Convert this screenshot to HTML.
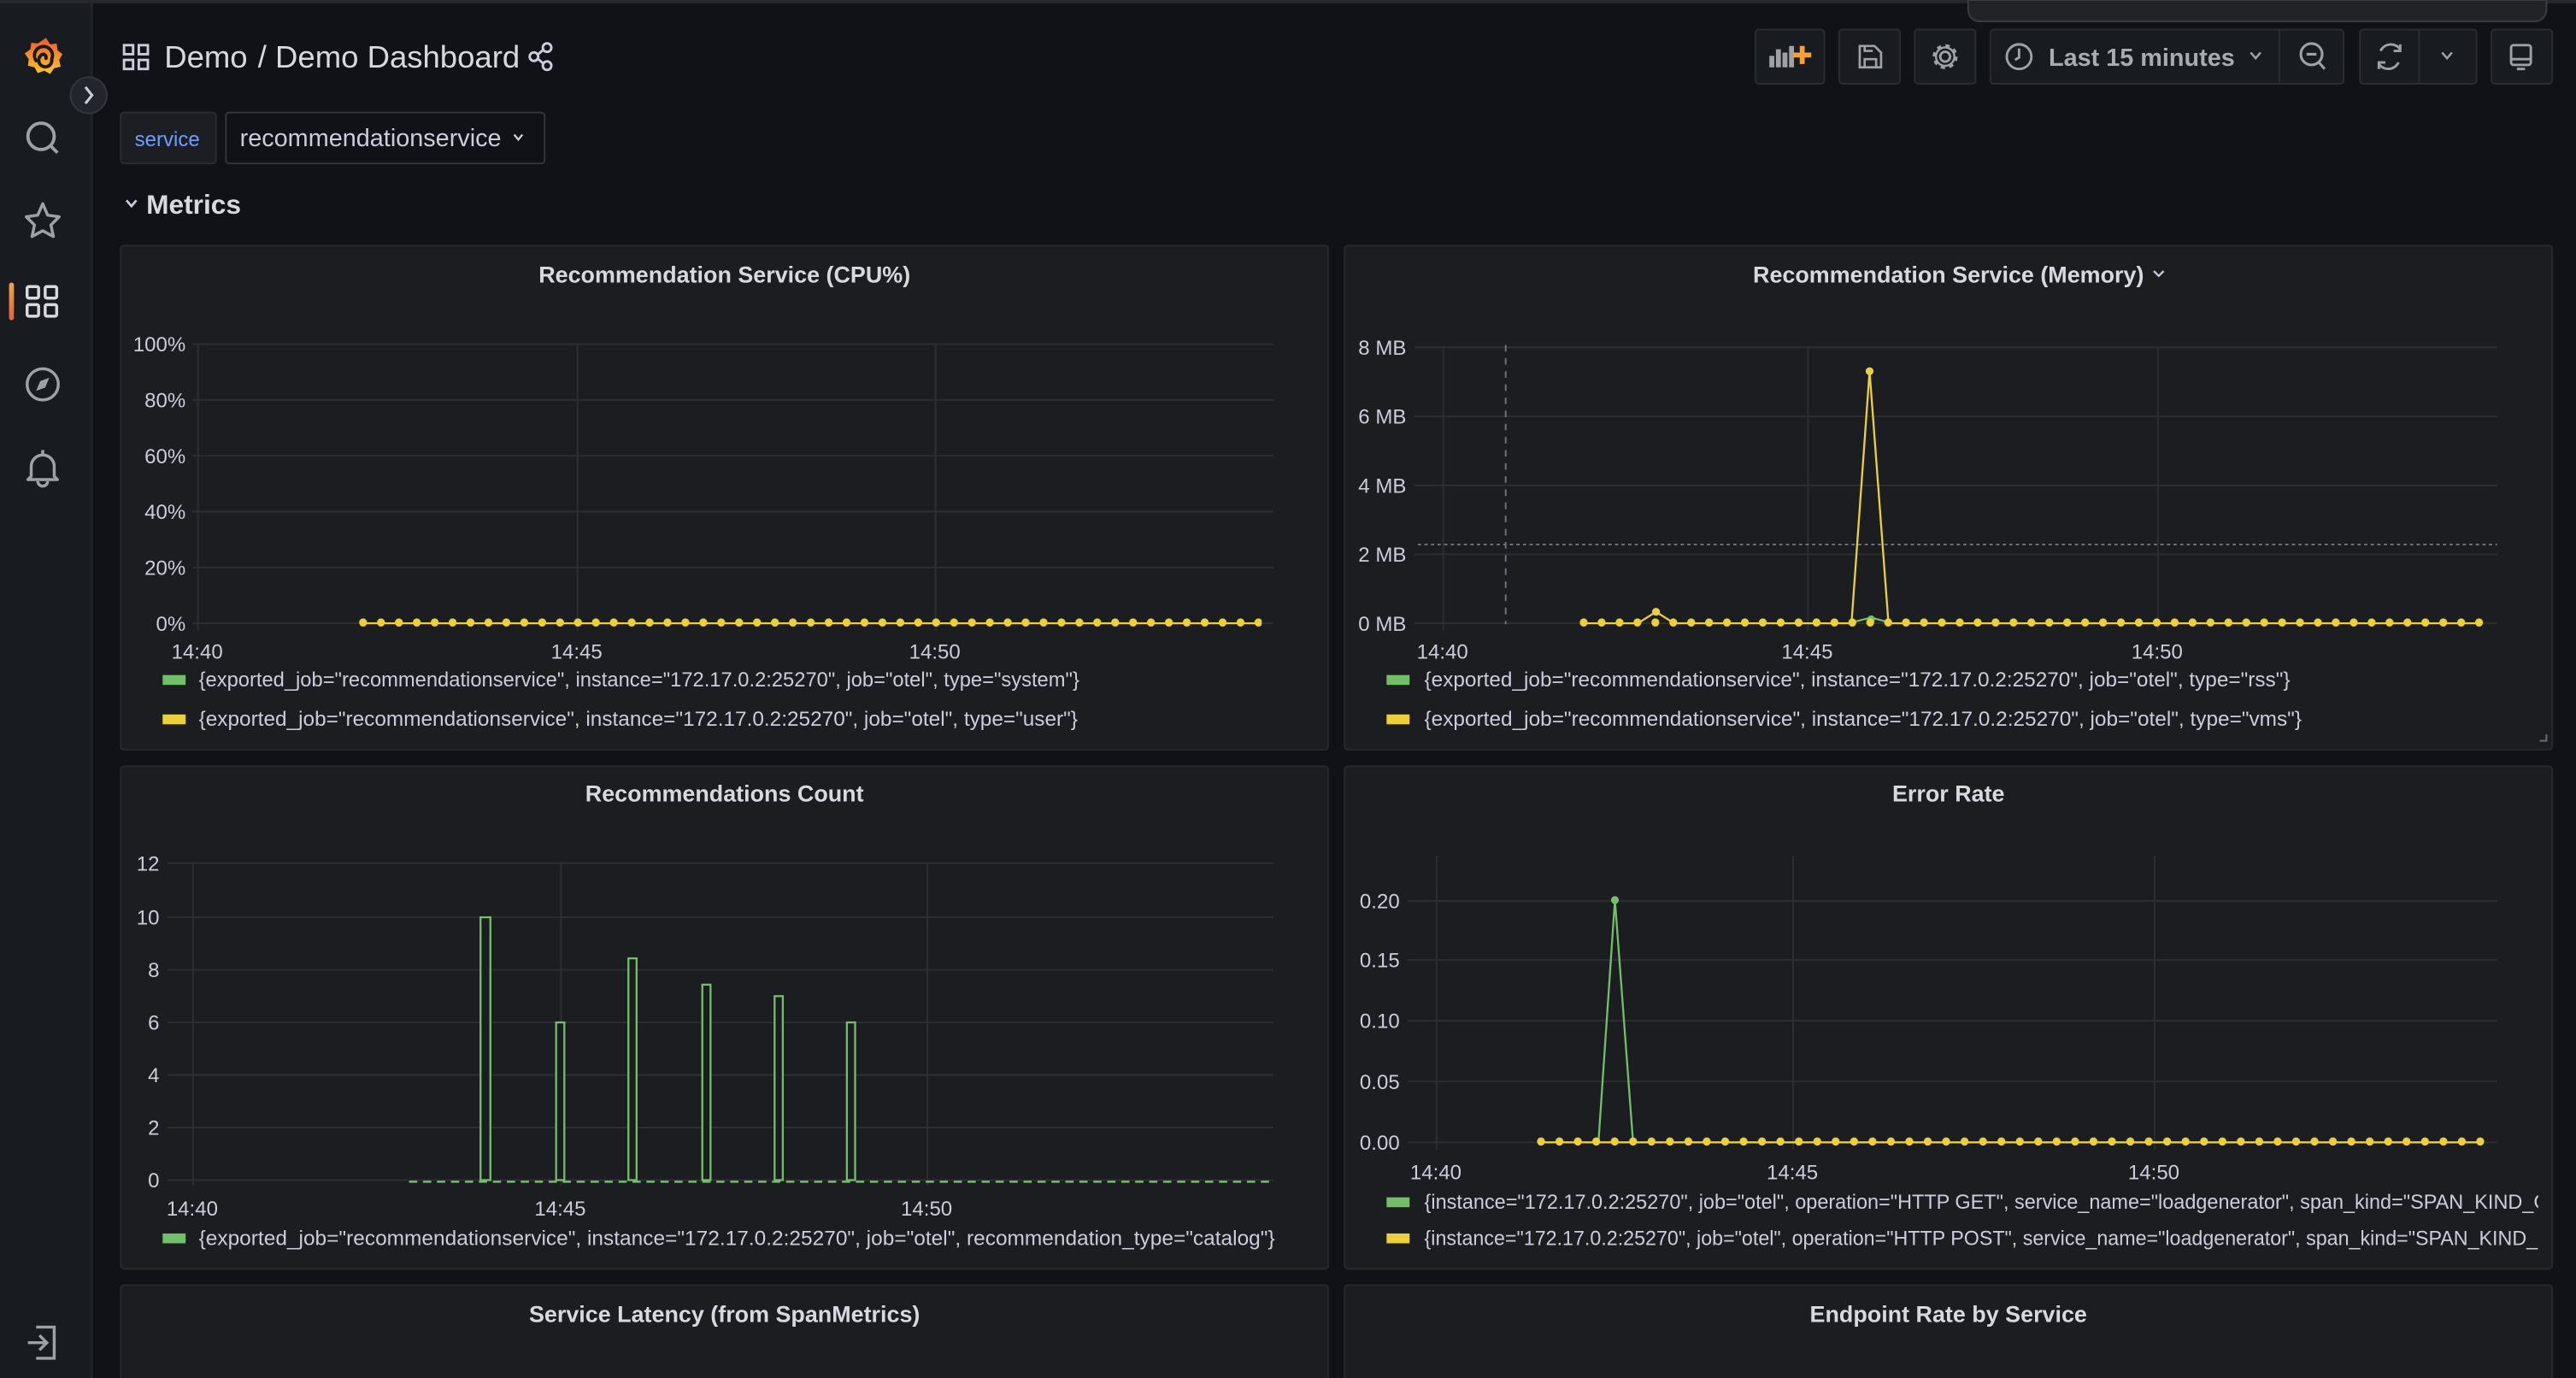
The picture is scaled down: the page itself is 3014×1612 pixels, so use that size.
<!DOCTYPE html>
<html><head><meta charset="utf-8"><style>
html,body{margin:0;padding:0;background:#111217;overflow:hidden;width:3014px;height:1612px}
svg{display:block}
text{font-family:"Liberation Sans",sans-serif}
</style></head><body>
<svg width="3014" height="1612" viewBox="0 0 1568 839" preserveAspectRatio="none" xmlns="http://www.w3.org/2000/svg">
<defs>
<pattern id="dy" x="215.55" y="374" width="10.9" height="10" patternUnits="userSpaceOnUse"><ellipse cx="5.45" cy="5" rx="2.4" ry="2.5" fill="#ecd03a"/></pattern>
<pattern id="dy2" x="958.55" y="374" width="10.9" height="10" patternUnits="userSpaceOnUse"><ellipse cx="5.45" cy="5" rx="2.4" ry="2.5" fill="#ecd03a"/></pattern>
<pattern id="dy3" x="932.4" y="690" width="11.21" height="10" patternUnits="userSpaceOnUse"><ellipse cx="5.6" cy="5" rx="2.4" ry="2.5" fill="#ecd03a"/></pattern>
<clipPath id="c4"><rect x="818" y="466" width="727" height="307"/></clipPath>
<linearGradient id="og" x1="0" y1="0" x2="0" y2="1"><stop offset="0" stop-color="#f3a33f"/><stop offset="1" stop-color="#e7613a"/></linearGradient>
<linearGradient id="lg" x1="0" y1="0" x2="0" y2="1"><stop offset="0" stop-color="#ee5a2a"/><stop offset="1" stop-color="#fbc52b"/></linearGradient>
</defs>
<rect width="1568" height="839" fill="#111217"/>
<!-- sidebar -->
<rect x="0" y="0" width="56" height="839" fill="#181b1f"/>
<rect x="55.5" y="0" width="1" height="839" fill="#26282d"/>
<rect x="0" y="0" width="1568" height="2" fill="#26282d"/>
<!-- logo -->
<path d="M28 23 L30.5 27 L34.5 26.5 L35 30.5 L38 33 L36 36.5 L37 40.5 L33 41.5 L30.5 45 L27 43 L23 44.5 L21 41 L17 40 L17.5 36 L15 32.5 L18.5 30 L19 26 L23 26.5 Z" fill="url(#lg)"/>
<path d="M22 37 A5.5 5.5 0 1 1 31.5 36 A4 4 0 1 1 26 33 A2 2 0 0 1 28 35.5" fill="none" stroke="#181b1f" stroke-width="2" stroke-linecap="round"/>
<!-- collapse button -->
<circle cx="54" cy="58" r="11" fill="#22252b" stroke="#34373d"/>
<path d="M52 53 L56 58 L52 63" fill="none" stroke="#ccccdc" stroke-width="1.6"/>
<!-- search -->
<circle cx="25" cy="83" r="8" fill="none" stroke="#9fa1a7" stroke-width="2"/>
<path d="M31 89 L35 93" stroke="#9fa1a7" stroke-width="2"/>
<!-- star -->
<path d="M26 124 L29 131 L36 132 L31 137 L32.5 144 L26 140.5 L19.5 144 L21 137 L16 132 L23 131 Z" fill="none" stroke="#9fa1a7" stroke-width="1.8" stroke-linejoin="round"/>
<!-- dashboards active -->
<rect x="5.5" y="172" width="3" height="23" rx="1.5" fill="url(#og)"/>
<g fill="none" stroke="#d8d8e0" stroke-width="1.8"><rect x="16.5" y="174.5" width="7" height="7" rx="1"/><rect x="27.5" y="174.5" width="7" height="7" rx="1"/><rect x="16.5" y="185.5" width="7" height="7" rx="1"/><rect x="27.5" y="185.5" width="7" height="7" rx="1"/></g>
<!-- explore -->
<circle cx="26" cy="234" r="9.5" fill="none" stroke="#9fa1a7" stroke-width="1.8"/>
<path d="M30 230 L27.5 236 L22 238 L24.5 232 Z" fill="#9fa1a7"/>
<!-- bell -->
<path d="M19 290 L19 284 A7 7 0 0 1 33 284 L33 290 L35 292 L17 292 Z" fill="none" stroke="#9fa1a7" stroke-width="1.8" stroke-linejoin="round"/>
<path d="M23 293 A3 3 0 0 0 29 293" fill="none" stroke="#9fa1a7" stroke-width="1.8"/>
<path d="M26 274 L26 277" stroke="#9fa1a7" stroke-width="1.8"/>
<!-- signin -->
<path d="M22 808 L33 808 L33 827 L22 827" fill="none" stroke="#9fa1a7" stroke-width="1.8"/>
<path d="M17 817.5 L28 817.5 M24 813 L28.5 817.5 L24 822" fill="none" stroke="#9fa1a7" stroke-width="1.8"/>
<!-- header -->
<g fill="none" stroke="#ccccdc" stroke-width="1.5"><rect x="75.5" y="27.5" width="5.5" height="5.5"/><rect x="84.5" y="27.5" width="5.5" height="5.5"/><rect x="75.5" y="36.5" width="5.5" height="5.5"/><rect x="84.5" y="36.5" width="5.5" height="5.5"/></g>
<text x="100" y="41" font-size="19" fill="#d8d9e0">Demo</text>
<text x="157" y="41" font-size="19" fill="#d8d9e0">/ Demo Dashboard</text>
<g fill="none" stroke="#ccccdc" stroke-width="1.5"><circle cx="333" cy="29" r="2.6"/><circle cx="333" cy="40" r="2.6"/><circle cx="325" cy="34.5" r="2.6"/><path d="M327.3 33.3 L330.7 30.3 M327.3 35.7 L330.7 38.7"/></g>
<!-- top popup -->
<path d="M1198 0 L1198 6 A7 7 0 0 0 1205 13 L1543 13 A7 7 0 0 0 1550 6 L1550 0 Z" fill="#222327" stroke="#3a3c42"/>
<!-- toolbar -->
<g fill="#181b1f" stroke="#2a2c31">
<rect x="1068.5" y="18" width="42" height="33" rx="2"/>
<rect x="1119.5" y="18" width="37" height="33" rx="2"/>
<rect x="1165.5" y="18" width="37" height="33" rx="2"/>
<rect x="1211.5" y="18" width="215" height="33" rx="2"/>
<rect x="1436.5" y="18" width="71" height="33" rx="2"/>
<rect x="1516.5" y="18" width="37" height="33" rx="2"/>
</g>
<path d="M1387.5 18 V51 M1472.5 18 V51" stroke="#2a2c31"/>
<g fill="#9fa1a7"><rect x="1077" y="34" width="3" height="7"/><rect x="1081" y="30" width="3" height="11"/><rect x="1085" y="32" width="3" height="9"/><rect x="1089" y="28" width="3" height="13"/></g>
<path d="M1097 28 V39 M1091.5 33.5 H1102.5" stroke="#f5a13a" stroke-width="3"/>
<path d="M1132 28 H1141 L1145 32 V41 H1132 Z M1135 41 V36 H1142 V41 M1135 28 V31 H1140" fill="none" stroke="#9fa1a7" stroke-width="1.4"/>
<circle cx="1184" cy="34.5" r="3" fill="none" stroke="#9fa1a7" stroke-width="1.5"/>
<circle cx="1184" cy="34.5" r="6.5" fill="none" stroke="#9fa1a7" stroke-width="2.2" stroke-dasharray="2.5 2.6"/>
<circle cx="1184" cy="34.5" r="5.6" fill="none" stroke="#9fa1a7" stroke-width="1.3"/>
<circle cx="1229" cy="34.5" r="7.5" fill="none" stroke="#9fa1a7" stroke-width="1.5"/>
<path d="M1229 29.5 V35 L1226.5 36.5" fill="none" stroke="#9fa1a7" stroke-width="1.5"/>
<text x="1247" y="40" font-size="15" font-weight="bold" fill="#a9abb2">Last 15 minutes</text>
<path d="M1370 32 L1373 35.5 L1376 32" fill="none" stroke="#9fa1a7" stroke-width="1.3"/>
<circle cx="1407" cy="33" r="6.5" fill="none" stroke="#9fa1a7" stroke-width="1.6"/>
<path d="M1404 33 H1410 M1411.5 38 L1415 42" stroke="#9fa1a7" stroke-width="1.6"/>
<path d="M1449 31 A7 7 0 0 1 1461 30 M1461 27 V31 H1457 M1460 38 A7 7 0 0 1 1448 39 M1448 42 V38 H1452" fill="none" stroke="#9fa1a7" stroke-width="1.5"/>
<path d="M1486.5 32 L1489.5 35.5 L1492.5 32" fill="none" stroke="#9fa1a7" stroke-width="1.3"/>
<rect x="1528.5" y="27.5" width="12" height="12" rx="1.5" fill="none" stroke="#9fa1a7" stroke-width="1.5"/>
<path d="M1528.5 36 H1540.5 M1532 42 H1537" stroke="#9fa1a7" stroke-width="1.5"/>
<!-- variable -->
<rect x="73.5" y="68.5" width="58" height="31" rx="2" fill="#1c1e23" stroke="#2a2c31"/>
<text x="82" y="89" font-size="12.5" fill="#6e9fff">service</text>
<rect x="137.5" y="68.5" width="194" height="31" rx="2" fill="#111217" stroke="#34363c"/>
<text x="146" y="89" font-size="15" fill="#ccccdc">recommendationservice</text>
<path d="M313 82 L315.5 85 L318 82" fill="none" stroke="#ccccdc" stroke-width="1.2"/>
<path d="M77 122 L80 125.5 L83 122" fill="none" stroke="#ccccdc" stroke-width="1.4"/>
<text x="89" y="130" font-size="16.5" font-weight="bold" fill="#d8d9e0">Metrics</text>
<!-- panels -->
<g fill="#1c1d21" stroke="#26282d">
<rect x="73.5" y="149.5" width="735" height="307" rx="2"/>
<rect x="818.5" y="149.5" width="735" height="307" rx="2"/>
<rect x="73.5" y="466.5" width="735" height="306" rx="2"/>
<rect x="818.5" y="466.5" width="735" height="306" rx="2"/>
<rect x="73.5" y="782.5" width="735" height="70" rx="2"/>
<rect x="818.5" y="782.5" width="735" height="70" rx="2"/>
</g>
<g font-size="14" font-weight="bold" fill="#d8d9e0" text-anchor="middle">
<text x="441" y="172">Recommendation Service (CPU%)</text>
<text x="1186" y="172">Recommendation Service (Memory)</text>
<text x="441" y="488">Recommendations Count</text>
<text x="1186" y="488">Error Rate</text>
<text x="441" y="805">Service Latency (from SpanMetrics)</text>
<text x="1186" y="805">Endpoint Rate by Service</text>
</g>
<path d="M1311 165 L1314 168 L1317 165" fill="none" stroke="#ccccdc" stroke-width="1.2"/>
<!-- P1 grid -->
<g stroke="#2c2e33" stroke-width="1">
<path d="M117 209.5 H775 M117 243.5 H775 M117 277.5 H775 M117 311.5 H775 M117 345.5 H775 M117 379.5 H775"/>
<path d="M120.5 209 V384 M351.5 209 V384 M569.5 209 V384"/>
</g>
<g font-size="12.5" fill="#ccccdc" text-anchor="end">
<text x="113" y="214">100%</text><text x="113" y="248">80%</text><text x="113" y="282">60%</text><text x="113" y="316">40%</text><text x="113" y="350">20%</text><text x="113" y="384">0%</text>
</g>
<g font-size="12.5" fill="#ccccdc" text-anchor="middle"><text x="120" y="401">14:40</text><text x="351" y="401">14:45</text><text x="569" y="401">14:50</text></g>
<path d="M221 379.5 H765" stroke="#ecd03a" stroke-width="1.2"/>
<rect x="217" y="374" width="551" height="10" fill="url(#dy)"/>
<rect x="99" y="411" width="14" height="6" fill="#73bf69"/>
<rect x="99" y="435" width="14" height="6" fill="#ecd03a"/>
<g font-size="12.5" fill="#ccccdc">
<text x="121" y="418" textLength="536" lengthAdjust="spacingAndGlyphs">{exported_job="recommendationservice", instance="172.17.0.2:25270", job="otel", type="system"}</text>
<text x="121" y="442" textLength="535" lengthAdjust="spacingAndGlyphs">{exported_job="recommendationservice", instance="172.17.0.2:25270", job="otel", type="user"}</text>
</g>
<!-- P2 -->
<g stroke="#2c2e33">
<path d="M861 211.5 H1520 M861 253.5 H1520 M861 295.5 H1520 M861 337.5 H1520 M861 379.5 H1520"/>
<path d="M878.5 211 V384 M1100.5 211 V384 M1313.5 211 V384"/>
</g>
<path d="M916.5 210 V380" stroke="#6c7580" stroke-dasharray="4 4"/>
<path d="M863 331.5 H1520" stroke="#6c7580" stroke-dasharray="2 2"/>
<g font-size="12.5" fill="#ccccdc" text-anchor="end">
<text x="856" y="216">8 MB</text><text x="856" y="258">6 MB</text><text x="856" y="300">4 MB</text><text x="856" y="342">2 MB</text><text x="856" y="384">0 MB</text>
</g>
<g font-size="12.5" fill="#ccccdc" text-anchor="middle"><text x="878" y="401">14:40</text><text x="1100" y="401">14:45</text><text x="1313" y="401">14:50</text></g>
<path d="M1127 379 L1139 376 L1150 379" fill="none" stroke="#73bf69" stroke-width="1.2"/>
<circle cx="1139" cy="377" r="2.3" fill="#73bf69"/>
<path d="M964 379.5 H997 L1008 372.5 L1019 379.5 H1127 L1138 226 L1149.5 379.5 H1510" fill="none" stroke="#ecd03a" stroke-width="1.2"/>
<rect x="960" y="374" width="554" height="10" fill="url(#dy2)"/>
<circle cx="1008" cy="372.5" r="2.4" fill="#ecd03a"/>
<circle cx="1138" cy="226" r="2.4" fill="#ecd03a"/>
<rect x="844" y="411" width="14" height="6" fill="#73bf69"/>
<rect x="844" y="435" width="14" height="6" fill="#ecd03a"/>
<g font-size="12.5" fill="#ccccdc">
<text x="867" y="418" textLength="527" lengthAdjust="spacingAndGlyphs">{exported_job="recommendationservice", instance="172.17.0.2:25270", job="otel", type="rss"}</text>
<text x="867" y="442" textLength="534" lengthAdjust="spacingAndGlyphs">{exported_job="recommendationservice", instance="172.17.0.2:25270", job="otel", type="vms"}</text>
</g>
<path d="M1546 451 H1550 V447" fill="none" stroke="#6c6e75" stroke-width="1"/>
<!-- P3 -->
<g stroke="#2c2e33">
<path d="M102 525.5 H775 M102 558.5 H775 M102 590.5 H775 M102 622.5 H775 M102 654.5 H775 M102 686.5 H775 M102 718.5 H775"/>
<path d="M117.5 525 V722 M341.5 525 V722 M564.5 525 V722"/>
</g>
<g font-size="12.5" fill="#ccccdc" text-anchor="end">
<text x="97" y="530">12</text><text x="97" y="563">10</text><text x="97" y="595">8</text><text x="97" y="627">6</text><text x="97" y="659">4</text><text x="97" y="691">2</text><text x="97" y="723">0</text>
</g>
<g font-size="12.5" fill="#ccccdc" text-anchor="middle"><text x="117" y="740">14:40</text><text x="341" y="740">14:45</text><text x="564" y="740">14:50</text></g>
<path d="M249 719.5 H775" stroke="#73bf69" stroke-width="1.3" stroke-dasharray="5 3.5"/>
<g fill="#1c1d21" stroke="#73bf69" stroke-width="1.2">
<rect x="292.5" y="558.5" width="6" height="160"/>
<rect x="338.5" y="622.5" width="5" height="96"/>
<rect x="382.5" y="583.5" width="5" height="135"/>
<rect x="427.5" y="599.5" width="5" height="119"/>
<rect x="471.5" y="606.5" width="5" height="112"/>
<rect x="515.5" y="622.5" width="5" height="96"/>
</g>
<rect x="99" y="751" width="14" height="6" fill="#73bf69"/>
<text x="121" y="758" font-size="12.5" fill="#ccccdc" textLength="655" lengthAdjust="spacingAndGlyphs">{exported_job="recommendationservice", instance="172.17.0.2:25270", job="otel", recommendation_type="catalog"}</text>
<!-- P4 -->
<g stroke="#2c2e33">
<path d="M857 548.5 H1520 M857 584.5 H1520 M857 621.5 H1520 M857 658.5 H1520 M857 695.5 H1520"/>
<path d="M874.5 521 V700 M1091.5 521 V700 M1311.5 521 V700"/>
</g>
<g font-size="12.5" fill="#ccccdc" text-anchor="end">
<text x="852" y="553">0.20</text><text x="852" y="589">0.15</text><text x="852" y="626">0.10</text><text x="852" y="663">0.05</text><text x="852" y="700">0.00</text>
</g>
<g font-size="12.5" fill="#ccccdc" text-anchor="middle"><text x="874" y="718">14:40</text><text x="1091" y="718">14:45</text><text x="1311" y="718">14:50</text></g>
<path d="M938 695.5 H1510" stroke="#ecd03a" stroke-width="1.2"/>
<path d="M973 695 L983 548 L994 695" fill="none" stroke="#73bf69" stroke-width="1.2"/>
<rect x="934" y="690" width="580" height="10" fill="url(#dy3)"/>
<circle cx="983" cy="548" r="2.4" fill="#73bf69"/>
<rect x="844" y="729" width="14" height="6" fill="#73bf69"/>
<rect x="844" y="751" width="14" height="6" fill="#ecd03a"/>
<g clip-path="url(#c4)" font-size="12.5" fill="#ccccdc">
<text x="867" y="736" textLength="727" lengthAdjust="spacingAndGlyphs">{instance="172.17.0.2:25270", job="otel", operation="HTTP GET", service_name="loadgenerator", span_kind="SPAN_KIND_CLIENT"}</text>
<text x="867" y="758" textLength="729" lengthAdjust="spacingAndGlyphs">{instance="172.17.0.2:25270", job="otel", operation="HTTP POST", service_name="loadgenerator", span_kind="SPAN_KIND_CLIENT"}</text>
</g>
</svg>
</body></html>
